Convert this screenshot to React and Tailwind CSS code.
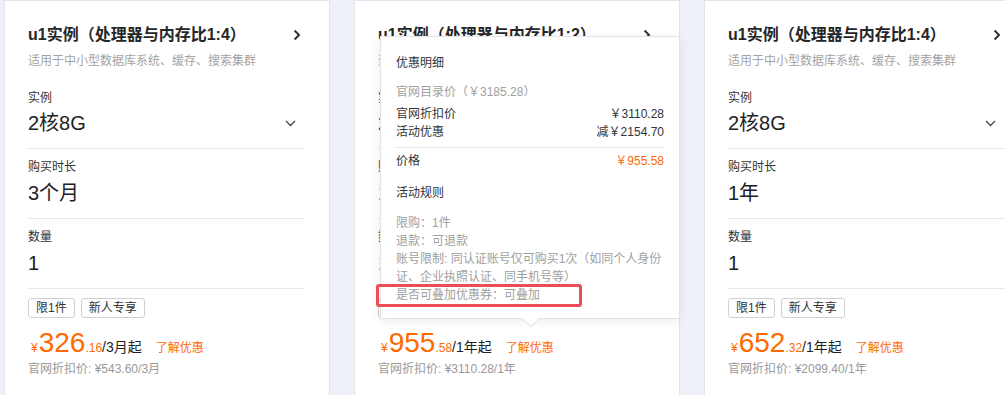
import React from "react";

const FONT = { fontFamily: '"Liberation Sans", Arial, "Noto Sans CJK SC", sans-serif' };

function ChevronRight() {
  return (
    <svg width="8" height="12" viewBox="0 0 8 12" className="mr-[4px] shrink-0">
      <path d="M1.6 1.5 L6 6 L1.6 10.5" fill="none" stroke="#333" strokeWidth="2" />
    </svg>
  );
}

function ChevronDown() {
  return (
    <svg width="11" height="7" viewBox="0 0 11 7" className="mr-[9px] shrink-0">
      <path d="M1 1 L5.5 5.5 L10 1" fill="none" stroke="#444" strokeWidth="1.3" />
    </svg>
  );
}

function Card({ title, sub, inst, dur, qty, price, dec, unit, orig }) {
  return (
    <div className="w-[326px] shrink-0 h-[430px] bg-white border border-[#e2e4ea] pl-[23px] pr-[24px] pt-[22px]">
      <div className="flex items-center justify-between h-[24px]">
        <div className="text-[16px] font-bold text-[#262626] leading-[24px] whitespace-nowrap">{title}</div>
        <ChevronRight />
      </div>
      <div className="text-[12px] leading-[18px] text-[#a3a3a3] mt-[5px] whitespace-nowrap">{sub}</div>

      <div className="mt-[20px] pb-[11px] border-b border-[#e8e8e8]">
        <div className="text-[12px] leading-[16px] text-[#333]">实例</div>
        <div className="mt-[3px] flex items-center justify-between">
          <div className="text-[20px] leading-[28px] text-[#222]">{inst}</div>
          <ChevronDown />
        </div>
      </div>

      <div className="pt-[10px] pb-[11px] border-b border-[#e8e8e8]">
        <div className="text-[12px] leading-[16px] text-[#333]">购买时长</div>
        <div className="mt-[4px] text-[20px] leading-[28px] text-[#222]">{dur}</div>
      </div>

      <div className="pt-[10px] pb-[11px] border-b border-[#e8e8e8]">
        <div className="text-[12px] leading-[16px] text-[#333]">数量</div>
        <div className="mt-[4px] text-[20px] leading-[28px] text-[#222]">{qty}</div>
      </div>

      <div className="mt-[9px] flex gap-[6px]">
        <div className="h-[20px] border border-[#d0d0d0] rounded-[3px] px-[7px] text-[12px] leading-[18px] text-[#333]">限1件</div>
        <div className="h-[20px] border border-[#d0d0d0] rounded-[3px] px-[7px] text-[12px] leading-[18px] text-[#333]">新人专享</div>
      </div>

      <div className="mt-[9px] flex items-baseline h-[32px] whitespace-nowrap">
        <span className="text-[12px] text-[#ff6a00] ml-[3px] mr-[1px]">¥</span>
        <span className="text-[28px] leading-[32px] text-[#ff6a00]">{price}</span>
        <span className="text-[12px] text-[#ff6a00]">.{dec}</span>
        <span className="text-[14px] text-[#222]">{unit}</span>
        <span className="text-[12px] text-[#ff6a00] ml-[14px]">了解优惠</span>
      </div>
      <div className="mt-[2px] text-[12px] leading-[16px] text-[#999] whitespace-nowrap">{orig}</div>
    </div>
  );
}

function Tooltip() {
  return (
    <div className="absolute left-[380px] top-[36px] w-[300px] bg-white border border-[#e4e4e4] shadow-[0_2px_10px_rgba(0,0,0,0.08)] px-[15px] pt-[17px] pb-[14px] text-[12px] leading-[18px]">
      <div className="text-[#333]">优惠明细</div>
      <div className="mt-[11px] text-[#a0a0a0]">官网目录价（￥3185.28）</div>
      <div className="mt-[4px] flex justify-between text-[#333]">
        <span>官网折扣价</span>
        <span>￥3110.28</span>
      </div>
      <div className="flex justify-between text-[#333]">
        <span>活动优惠</span>
        <span>减￥2154.70</span>
      </div>
      <div className="mt-[6px] border-t border-[#e8e8e8]" />
      <div className="mt-[4px] flex justify-between">
        <span className="text-[#333]">价格</span>
        <span className="text-[#ff6a00]">￥955.58</span>
      </div>
      <div className="mt-[14px] text-[#333]">活动规则</div>
      <div className="mt-[12px] text-[#a0a0a0] whitespace-nowrap">
        <div>限购：1件</div>
        <div>退款：可退款</div>
        <div>账号限制: 同认证账号仅可购买1次（如同个人身份</div>
        <div>证、企业执照认证、同手机号等）</div>
        <div>是否可叠加优惠券：可叠加</div>
      </div>
      <div className="absolute left-[-5px] top-[247px] w-[206px] h-[23px] border-[3px] border-[#ec4c55] rounded-[3px]" />
      <div className="absolute left-[144px] bottom-[-7px] w-[12px] h-[12px] rotate-45 bg-white border-r border-b border-[#e4e4e4]" />
    </div>
  );
}

export default function App() {
  return (
    <div style={FONT} className="relative w-[1005px] h-[395px] overflow-hidden bg-[#eff1f9] flex gap-[24px] pl-[4px]">
      <Card
        title="u1实例（处理器与内存比1:4）"
        sub="适用于中小型数据库系统、缓存、搜索集群"
        inst="2核8G"
        dur="3个月"
        qty="1"
        price="326"
        dec="16"
        unit="/3月起"
        orig="官网折扣价: ¥543.60/3月"
      />
      <Card
        title="u1实例（处理器与内存比1:2）"
        sub="适用于网站和应用服务器、开发测试环境"
        inst="2核4G"
        dur="1年"
        qty="1"
        price="955"
        dec="58"
        unit="/1年起"
        orig="官网折扣价: ¥3110.28/1年"
      />
      <Card
        title="u1实例（处理器与内存比1:4）"
        sub="适用于中小型数据库系统、缓存、搜索集群"
        inst="2核8G"
        dur="1年"
        qty="1"
        price="652"
        dec="32"
        unit="/1年起"
        orig="官网折扣价: ¥2099.40/1年"
      />
      <Tooltip />
    </div>
  );
}
